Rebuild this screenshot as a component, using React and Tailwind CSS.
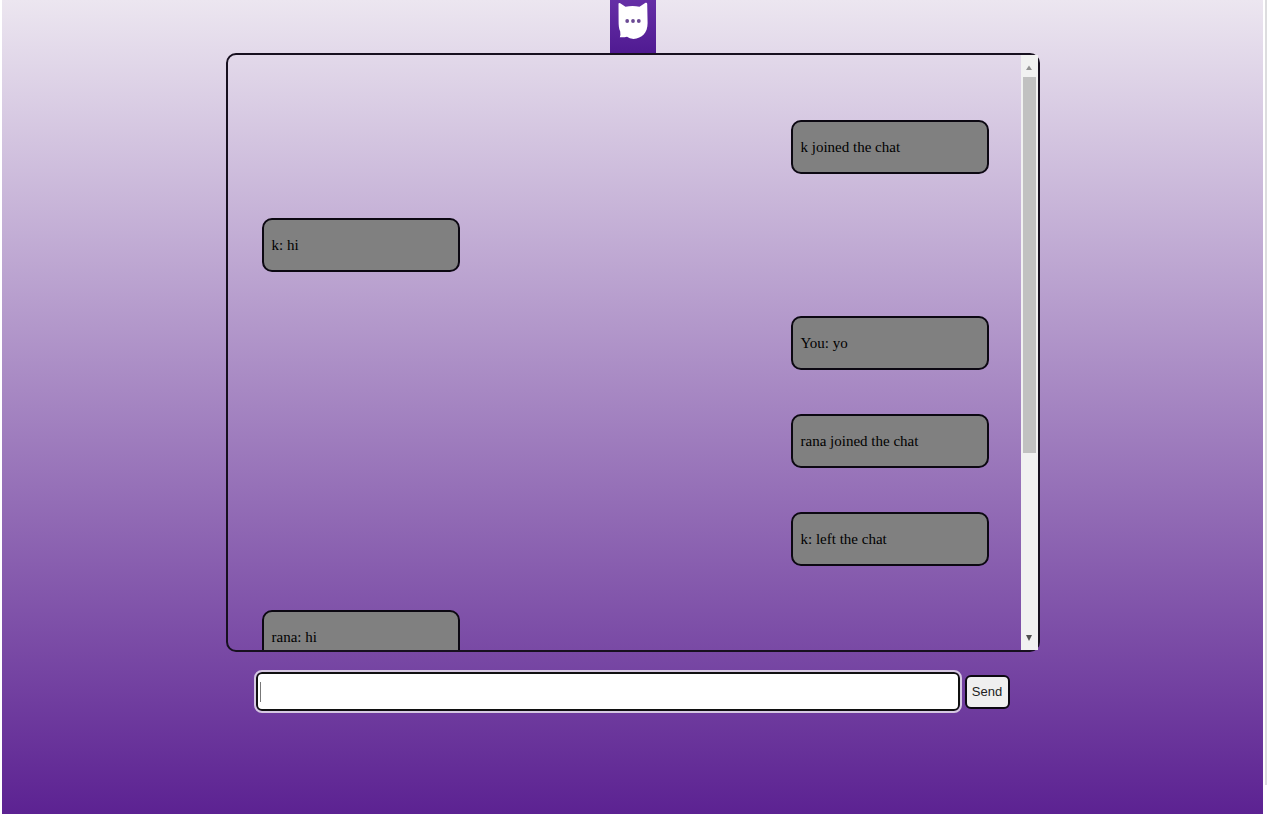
import React from "react";

const messages = [
  { text: "k joined the chat", side: "right" },
  { text: "k: hi", side: "left" },
  { text: "You: yo", side: "right" },
  { text: "rana joined the chat", side: "right" },
  { text: "k: left the chat", side: "right" },
  { text: "rana: hi", side: "left" },
];

function Logo() {
  return (
    <svg viewBox="0 0 46 53" className="h-[53px] w-[46px]" role="img" aria-label="Chat logo">
      <defs>
        <linearGradient id="tile" x1="0" y1="0" x2="0" y2="1">
          <stop offset="0" stopColor="#652fa6" />
          <stop offset="1" stopColor="#501a92" />
        </linearGradient>
      </defs>
      <rect width="46" height="53" fill="url(#tile)" />
      <path
        d="M8.5 3.5 Q9 2.6 10.2 3.2 L15.5 6.8 Q22.5 5.4 29.5 6.8 L35.5 2.8 Q37 2.2 37.2 3.8 L37.6 23 C37.6 33 32 38.4 23.5 38.9 Q19.5 38.8 17 36.8 Q13.5 37.6 9.8 37.2 Q10.8 35 10.2 31.5 C8.8 28.5 8.6 25 8.6 21 Z"
        fill="#fff"
      />
      <circle cx="17.2" cy="21" r="1.9" fill="#6b4a94" />
      <circle cx="23" cy="21" r="1.9" fill="#6b4a94" />
      <circle cx="28.8" cy="21" r="1.9" fill="#6b4a94" />
    </svg>
  );
}

function ScrollBar() {
  return (
    <div className="flex w-[17px] shrink-0 flex-col items-center bg-[#f1f1f1]" aria-hidden="true">
      <svg viewBox="0 0 16 22" className="h-[22px] w-4 shrink-0">
        <path d="M5 15 L8 10.5 L11 15 Z" fill="#929292" />
      </svg>
      <div className="h-[376px] w-[13px] bg-[#c1c1c1]" />
      <div className="flex-1" />
      <svg viewBox="0 0 16 22" className="h-[22px] w-4 shrink-0">
        <path d="M5 7 L11 7 L8 13 Z" fill="#505050" />
      </svg>
    </div>
  );
}

export default function App() {
  return (
    <div className="flex bg-white pl-[2px] font-['Liberation_Serif','Times_New_Roman',serif] text-black">
      <main className="flex min-h-[814px] flex-1 flex-col items-center bg-linear-to-b/srgb from-[#ece6f0] to-[#5c2292]">
        <Logo />
        <section
          aria-label="Messages"
          className="flex h-[599px] w-full max-w-[814px] rounded-[10px] border-2 border-[#17101f]"
        >
          <ul className="flex flex-1 flex-col gap-11 overflow-hidden pl-[34px] pr-8 pt-[65px]">
            {messages.map((m) => (
              <li
                key={m.text}
                className={`flex h-[54px] w-[198px] shrink-0 items-center rounded-[10px] border-2 border-[#0c0812] bg-[#808080] px-2 text-[15px] leading-6 ${
                  m.side === "right" ? "self-end" : "self-start"
                }`}
              >
                {m.text}
              </li>
            ))}
          </ul>
          <ScrollBar />
        </section>
        <form
          className="mt-5 flex w-full max-w-[754px] items-center gap-[5px]"
          onSubmit={(e) => e.preventDefault()}
        >
          <div className="relative flex min-w-0 flex-1">
            <input
              type="text"
              aria-label="Message"
              autoFocus
              className="h-[39px] w-full rounded-[6px] border-2 border-[#101010] bg-white px-[2px] font-['Liberation_Sans',Arial,sans-serif] text-[16px] caret-transparent outline-2 outline-[#d6c8e2]"
            />
            <span
              aria-hidden="true"
              className="pointer-events-none absolute left-1 top-[10px] h-5 w-px bg-[#777777]"
            />
          </div>
          <button
            type="submit"
            className="h-[34px] w-[45px] rounded-[6px] border-2 border-[#0c0812] bg-[#efefef] font-['Liberation_Sans',Arial,sans-serif] text-[13px] text-[#222222]"
          >
            Send
          </button>
        </form>
      </main>
      <div className="flex w-[6px] shrink-0 justify-center">
        <div className="h-[785px] w-[2px] bg-[#dddddf]" />
      </div>
    </div>
  );
}
